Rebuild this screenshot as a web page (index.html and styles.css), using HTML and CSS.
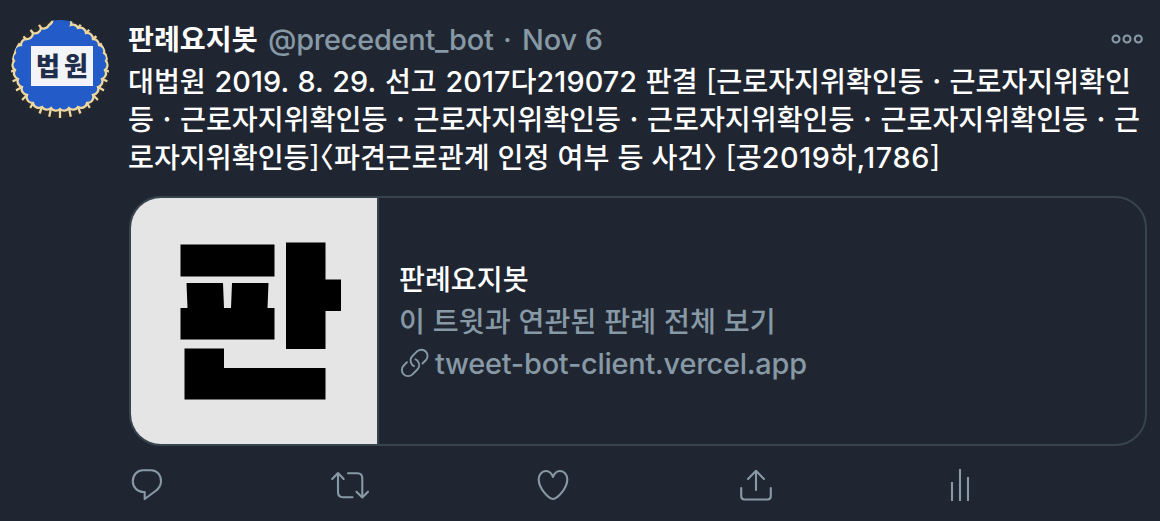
FILE: index.html
```html
<!DOCTYPE html>
<html lang="ko">
<head>
<meta charset="utf-8">
<title>판례요지봇</title>
<link rel="stylesheet" href="styles.css">
</head>
<body>
<article class="tweet">
  <div class="avatar">
    <svg class="avatar-ring" viewBox="0 0 98 98">
      <circle cx="49" cy="49" r="49" fill="#292a2e"/>
      <g stroke="#ecd8a0" stroke-width="2.300" fill="#235bc8">
        <path d="M41 -2A6 6 0 0 1 38 5A6 6 0 0 1 30 8A6 6 0 0 1 22 13A6 6 0 0 1 15 19A6 6 0 0 0 10 25A6 6 0 0 0 4 33A6 6 0 0 0 3 41A6 6 0 0 0 4 50A6 6 0 0 0 7 59A6 6 0 0 0 11 67A6 6 0 0 0 16 75A6 6 0 0 0 22 83A6 6 0 0 0 31 87A6 6 0 0 0 40 88A6 6 0 0 0 49 89A6 6 0 0 0 58 88A6 6 0 0 0 67 87A6 6 0 0 0 76 83A6 6 0 0 0 82 75A6 6 0 0 0 87 67A6 6 0 0 0 91 59A6 6 0 0 0 94 50A6 6 0 0 0 95 41A6 6 0 0 0 93 33A6 6 0 0 0 88 25A6 6 0 0 0 82 19A6 6 0 0 0 75 13A6 6 0 0 0 67 8A6 6 0 0 0 60 5A6 6 0 0 0 57 -2Z"/>
        <path fill="none" d="M30 8L27 3M22 13L18 8M15 19L10 14M10 25L4 22M4 50L-1 52M7 59L0 62M11 67L4 71M16 75L10 81M22 83L18 90M31 87L28 95M40 88L38 98M49 89V98M58 88L60 98M67 87L70 95M76 83L80 90M82 75L88 81M87 67L94 71M91 59L98 62M94 50L99 52M67 8L71 3M75 13L80 8M82 19L88 14M88 25L94 22"/>
      </g>
      <path d="M20 26H82V66H20Z" fill="#f2f4f8"/>
    </svg>
    <span class="avatar-text"><b>법</b><b>원</b></span>
  </div>
  <div class="content">
    <header class="head">
      <strong class="name">판례요지봇</strong>
      <span class="handle">@precedent_bot</span>
      <span class="sep">·</span>
      <time class="date">Nov 6</time>
      <svg class="more" viewBox="0 0 32 10"><g fill="none" stroke="#8899a6" stroke-width="2.100"><circle cx="5" cy="5" r="3.500"/><circle cx="16" cy="5" r="3.500"/><circle cx="27.300" cy="5" r="3.500"/></g></svg>
    </header>
    <div class="text">
      <p class="line line-a">대법원 <span class="num">2019. 8. 29.</span> 선고 <span class="num">2017</span>다<span class="num">219072</span> 판결 [근로자지위확인등 · 근로자지위확인</p>
      <p class="line line-b">등 · 근로자지위확인등 · 근로자지위확인등 · 근로자지위확인등 · 근로자지위확인등 · 근</p>
      <p class="line line-c">로자지위확인등]<span class="angle">〈</span>파견근로관계 인정 여부 등 사건<span class="angle">〉</span> [공<span class="num">2019</span>하<span class="num">,1786</span>]</p>
    </div>
    <section class="card">
      <div class="thumb">
        <svg viewBox="131 198 246 246"><path d="M180.500 244.500H274.500V276.500H180.500ZM186.500 283H223L224 308H231L232 283H268.500L267.500 308H274.500V339.500H180.500V308H187.500ZM286 242.500H325.500V279.500H341V311H325.500V349H286ZM184.500 348.500H224V368H325.500V399.500H184.500Z"/></svg>
      </div>
      <div class="card-body">
        <p class="card-title">판례요지봇</p>
        <p class="card-desc">이 트윗과 연관된 판례 전체 보기</p>
        <p class="card-link">
          <svg class="link-icon" viewBox="0 0 30 32" fill="none" stroke="#8899a6" stroke-width="1.900" stroke-linecap="round"><path d="M11.500 16.500A6.200 6.200 0 0 1 12.500 9L17.300 4.200A6.200 6.200 0 0 1 26 13L22.500 16.500M18 14.500A6.200 6.200 0 0 1 17.300 22.500L12.500 27.300A6.200 6.200 0 0 1 3.700 18.500L7 15.200M11.500 16.500Q12 18.500 14 19M18 14.500Q17.500 13 15.500 12.300"/></svg>
          <span>tweet-bot-client.vercel.app</span>
        </p>
      </div>
    </section>
    <footer class="actions">
      <svg viewBox="127 465 40 40"><path d="M143 470.300H151C157 470.300 161 475 161 481C161 485.500 159 488.500 155.500 491L144.700 499V492C137.500 492.500 132.800 487 132.800 481.200C132.800 475 137 470.300 143 470.300Z"/></svg>
      <svg viewBox="330 465 40 40"><path d="M332.200 479L338 473L343.700 479M338 473.500V492Q338 497.200 343 497.200H352.500M348 473.300H357.500Q362.300 473.300 362.300 478.300V497M356.500 491.700L362.300 497.500L368 491.700"/></svg>
      <svg viewBox="533 465 40 40"><path d="M553 477C551.500 473 548.500 471 546 471C541.500 471 538.700 475 538.700 479.500C538.700 488 548.500 499 553 499C557.500 499 567.300 488 567.300 479.500C567.300 475 564.500 471 560 471C557.500 471 554.500 473 553 477Z"/></svg>
      <svg viewBox="736 465 40 40"><path d="M748 479L756 470.800L764 479M756 471V490M741.200 488V496Q741.200 499.500 744.500 499.500H767.500Q770.800 499.500 770.800 496V488"/></svg>
      <svg viewBox="939 465 40 40"><path stroke-linecap="butt" d="M952 482V501M960 469V501M968 477V501"/></svg>
    </footer>
  </div>
</article>
</body>
</html>
```
FILE: styles.css
```css
* { box-sizing: border-box; }
body {
  margin: 0;
  background: #1f2631;
  color: #fff;
  font-family: Inter, "Noto Sans CJK KR", sans-serif;
  font-size: 28.2px;
  font-weight: 500;
}
p { margin: 0; }
.tweet { display: flex; height: 521px; padding: 20px 12px 0 11px; overflow: hidden; }
.avatar { position: relative; width: 98px; height: 98px; margin-right: 20px; flex: none; border-radius: 50%; overflow: hidden; }
.avatar-ring { display: block; width: 98px; height: 98px; }
.avatar-text {
  position: absolute; left: 20px; top: 26px; width: 62px; height: 40px;
  display: flex; justify-content: center; gap: 4px;
  color: #202d4b; font: 900 26px/38px "Noto Sans CJK KR", sans-serif;
}
.content { flex: 1; min-width: 0; }
.head { display: flex; height: 40px; margin-left: -1px; line-height: 40px; color: #8899a6; font-size: 28.9px; font-weight: 450; white-space: nowrap; }
.name { width: 140px; color: #fff; font-size: 28.2px; font-weight: 700; }
.handle { width: 235px; letter-spacing: -0.25px; }
.sep { width: 19px; }
.date { letter-spacing: -0.1px; }
.more { width: 32px; height: 10px; margin: 14px 5px 0 auto; }
.text { margin-left: -1px; padding-top: 1px; font-family: "Noto Sans CJK KR", sans-serif; }
.line { height: 38px; line-height: 38px; white-space: nowrap; text-align-last: justify; }
.line-a { width: 1003px; }
.line-b { width: 1012px; }
.line-c { width: 812px; }
.num { font-family: Inter, sans-serif; font-size: 28.8px; font-weight: 500; letter-spacing: 0.1px; }
.line-c .num { letter-spacing: 0.6px; }
.angle { font-feature-settings: "halt"; }
.card { display: flex; width: 1018px; height: 250px; margin-top: 21px; border: 2px solid #38444d; border-radius: 32px; overflow: hidden; }
.thumb { width: 248px; border-right: 2px solid #38444d; background: #e5e5e5; }
.thumb svg { display: block; width: 246px; height: 246px; }
.card-body { padding: 61px 0 0 20px; line-height: 42px; white-space: nowrap; }
.card-desc, .card-link { color: #8899a6; }
.card-desc { word-spacing: 0.4px; }
.card-link { display: flex; align-items: center; gap: 5px; padding-left: 1px; font-size: 28.9px; font-weight: 450; letter-spacing: -0.23px; }
.link-icon { width: 30px; height: 32px; margin-top: -2px; }
.actions { display: flex; gap: 163px; margin: 19px 0 0 -2px; }
.actions svg { width: 40px; height: 40px; fill: none; stroke: #8899a6; stroke-width: 2.100; stroke-linecap: round; stroke-linejoin: round; }
```
